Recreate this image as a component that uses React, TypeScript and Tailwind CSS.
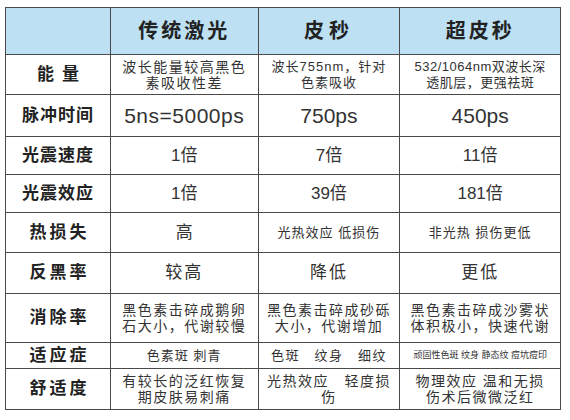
import React from "react";

const FONT = { fontFamily: '"Liberation Sans","Noto Sans CJK SC",sans-serif' };

type Row = { label: string; labelCls?: string; h: string; cells: React.ReactNode[]; cellCls: string[] };

const rows: Row[] = [
  {
    label: "能量",
    labelCls: "tracking-[8px] pl-[8px]",
    h: "h-[40px]",
    cells: [
      <>波长能量较高黑色<br />素吸收性差</>,
      <>波长755nm，针对<br />色素吸收</>,
      <>532/1064nm双波长深<br />透肌层，更强祛斑</>,
    ],
    cellCls: [
      "text-[14px] leading-[16px] tracking-[1.5px]",
      "text-[13px] leading-[16px] tracking-[1px]",
      "text-[13px] leading-[16px] tracking-[0.5px]",
    ],
  },
  {
    label: "脉冲时间",
    h: "h-[42px]",
    cells: ["5ns=5000ps", "750ps", "450ps"],
    cellCls: ["text-[21px] tracking-[0.5px]", "text-[21px]", "text-[21px]"],
  },
  {
    label: "光震速度",
    h: "h-[38px]",
    cells: ["1倍", "7倍", "11倍"],
    cellCls: ["text-[17px]", "text-[17px]", "text-[17px]"],
  },
  {
    label: "光震效应",
    h: "h-[38px]",
    cells: ["1倍", "39倍", "181倍"],
    cellCls: ["text-[17px]", "text-[17px]", "text-[17px]"],
  },
  {
    label: "热损失",
    labelCls: "tracking-[3px] pl-[3px]",
    h: "h-[40px]",
    cells: ["高", "光热效应 低损伤", "非光热 损伤更低"],
    cellCls: ["text-[17px]", "text-[13px] tracking-[1px]", "text-[13px] tracking-[1px]"],
  },
  {
    label: "反黑率",
    labelCls: "tracking-[3px] pl-[3px]",
    h: "h-[41px]",
    cells: ["较高", "降低", "更低"],
    cellCls: ["text-[17px] tracking-[2px]", "text-[17px] tracking-[2px]", "text-[17px] tracking-[2px]"],
  },
  {
    label: "消除率",
    labelCls: "tracking-[3px] pl-[3px]",
    h: "h-[49px]",
    cells: [
      <>黑色素击碎成鹅卵<br />石大小，代谢较慢</>,
      <>黑色素击碎成砂砾<br />大小，代谢增加</>,
      <>黑色素击碎成沙雾状<br />体积极小，快速代谢</>,
    ],
    cellCls: [
      "text-[14px] leading-[16px] tracking-[1.5px]",
      "text-[14px] leading-[16px] tracking-[1.5px]",
      "text-[14px] leading-[16px] tracking-[1.5px]",
    ],
  },
  {
    label: "适应症",
    labelCls: "tracking-[3px] pl-[3px]",
    h: "h-[26px]",
    cells: ["色素斑 刺青", "色斑　纹身　细纹", "顽固性色斑 纹身 静态纹 痘坑痘印"],
    cellCls: ["text-[13px] tracking-[1px]", "text-[13px] tracking-[1.5px]", "text-[9px] tracking-[0px]"],
  },
  {
    label: "舒适度",
    labelCls: "tracking-[3px] pl-[3px]",
    h: "h-[41px]",
    cells: [
      <>有较长的泛红恢复<br />期皮肤易刺痛</>,
      <>光热效应　轻度损<br />伤</>,
      <>物理效应 温和无损<br />伤术后微微泛红</>,
    ],
    cellCls: [
      "text-[14px] leading-[16px] tracking-[1.5px]",
      "text-[14px] leading-[16px] tracking-[1.5px]",
      "text-[14px] leading-[16px] tracking-[1.5px]",
    ],
  },
];

export default function App() {
  return (
    <div className="w-[570px] h-[420px] bg-white overflow-hidden pt-[7px] pl-[5px]" style={FONT}>
      <div className="w-[556px] border-l border-t border-[#4a4a4a] text-[#333]">
        <div className="flex h-[47px] bg-[#bde0f3]">
          <div className="w-[105px] border-r border-b border-[#4a4a4a]" />
          <div className="w-[148px] border-r border-b border-[#4a4a4a] flex items-center justify-center text-[20px] font-bold tracking-[3px] text-[#222]">
            传统激光
          </div>
          <div className="w-[142px] border-r border-b border-[#4a4a4a] flex items-center justify-center text-[20px] font-bold tracking-[5px] text-[#222]">
            皮秒
          </div>
          <div className="w-[161px] border-r border-b border-[#4a4a4a] flex items-center justify-center text-[20px] font-bold tracking-[3px] text-[#222]">
            超皮秒
          </div>
        </div>
        {rows.map((r, i) => (
          <div key={i} className={`flex ${r.h}`}>
            <div
              className={`w-[105px] border-r border-b border-[#4a4a4a] flex items-center justify-center text-[17px] font-bold text-[#222] ${r.labelCls ?? "tracking-[1px]"}`}
            >
              {r.label}
            </div>
            {r.cells.map((c, j) => (
              <div
                key={j}
                className={`${j === 0 ? "w-[148px]" : j === 1 ? "w-[142px]" : "w-[161px]"} border-r border-b border-[#4a4a4a] flex items-center justify-center text-center whitespace-nowrap overflow-hidden ${r.cellCls[j]}`}
              >
                <span>{c}</span>
              </div>
            ))}
          </div>
        ))}
      </div>
    </div>
  );
}
